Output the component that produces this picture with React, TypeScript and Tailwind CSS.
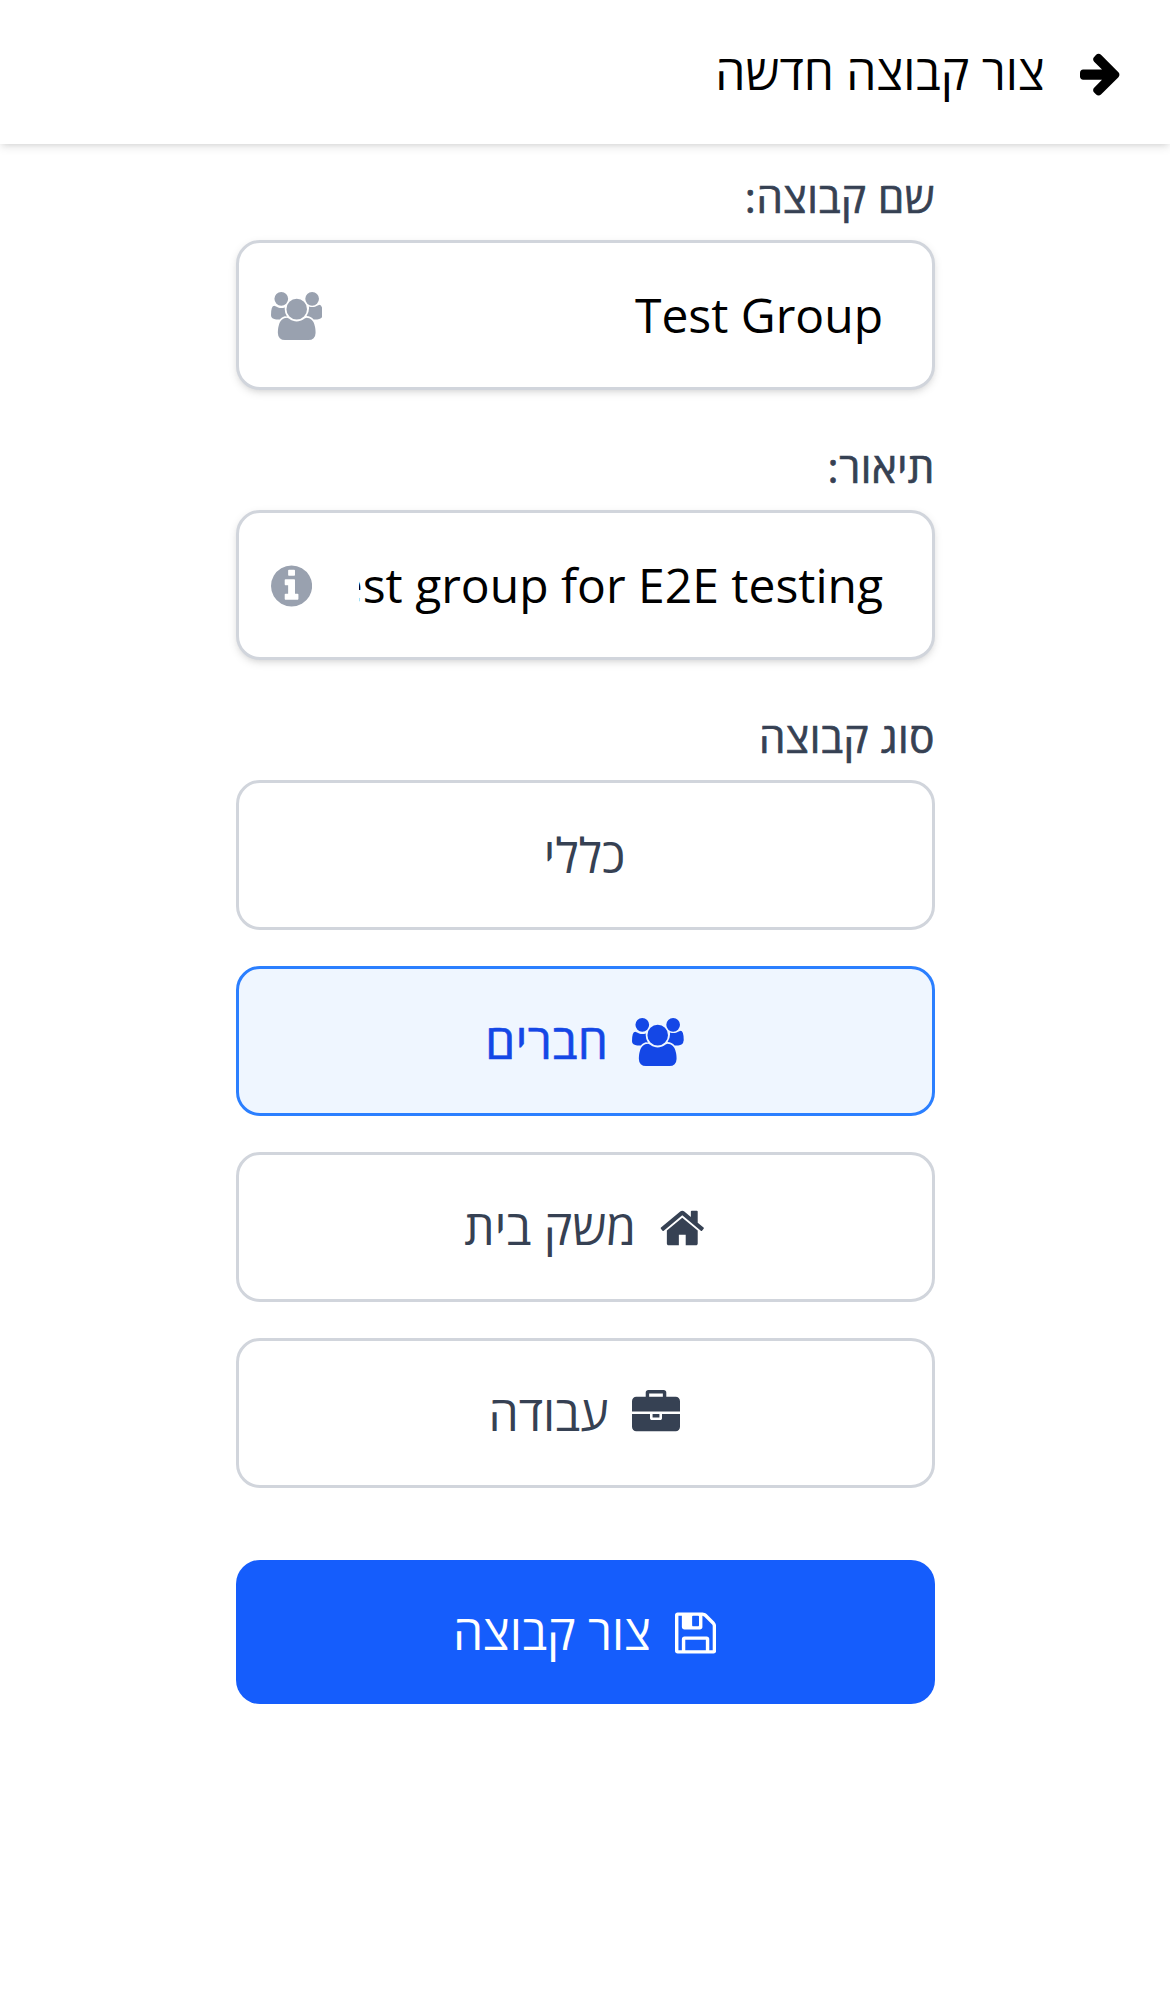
import React, { useState } from "react";

type IconProps = { className?: string };

function UsersIcon({ className = "" }: IconProps) {
  return (
    <svg viewBox="64 0 1920 1792" fill="currentColor" className={`mt-[2px] h-[48px] w-[51.43px] shrink-0 ${className}`}>
      <path d="M657 896q-162 5-265 128h-134q-82 0-138-40.500t-56-118.500q0-353 124-353 6 0 43.500 21t97.500 42.500 119 21.500q67 0 133-23-5 37-5 66 0 159 93 290zm1071 637q0 120-73 189.500t-194 69.500h-874q-121 0-194-69.500t-73-189.500q0-53 3.500-103.500t14-109 26.500-108.500 43-97.500 62-81 85.500-53.500 111.500-20q10 0 43 21.500t73 48 107 48 135 21.500 135-21.500 107-48 73-48 43-21.500q61 0 111.500 20t85.500 53.500 62 81 43 97.500 26.500 108.500 14 109 3.500 103.500zm-1024-1277q0 106-75 181t-181 75-181-75-75-181 75-181 181-75 181 75 75 181zm704 384q0 159-112.500 271.500t-271.500 112.500-271.500-112.500-112.500-271.500 112.500-271.500 271.500-112.500 271.500 112.500 112.500 271.500zm576 225q0 78-56 118.500t-138 40.500h-134q-103-123-265-128 93-131 93-290 0-29-5-66 66 23 133 23 59 0 119-21.500t97.500-42.500 43.500-21q124 0 124 353zm-128-609q0 106-75 181t-181 75-181-75-75-181 75-181 181-75 181 75 75 181z" />
    </svg>
  );
}

function InfoIcon({ className = "" }: IconProps) {
  return (
    <svg viewBox="128 0 1536 1792" fill="currentColor" className={`mt-[2px] h-[48px] w-[41.14px] shrink-0 ${className}`}>
      <path d="M1152 1376v-160q0-14-9-23t-23-9h-96v-512q0-14-9-23t-23-9h-320q-14 0-23 9t-9 23v160q0 14 9 23t23 9h96v320h-96q-14 0-23 9t-9 23v160q0 14 9 23t23 9h448q14 0 23-9t9-23zm-128-896v-160q0-14-9-23t-23-9h-192q-14 0-23 9t-9 23v160q0 14 9 23t23 9h192q14 0 23-9t9-23zm640 416q0 209-103 385.500t-279.500 279.500-385.500 103-385.500-103-279.500-279.500-103-385.500 103-385.500 279.500-279.500 385.500-103 385.500 103 279.500 279.500 103 385.500z" />
    </svg>
  );
}

function ArrowRightIcon() {
  return (
    <svg viewBox="128 0 1536 1792" fill="currentColor" className="mt-[2px] h-[48px] w-[41.14px] shrink-0">
      <path d="M1600 960q0 54-37 91l-651 651q-39 37-91 37-51 0-90-37l-75-75q-38-38-38-91t38-91l293-293h-704q-52 0-84.500-37.500t-32.500-90.500v-128q0-53 32.500-90.500t84.500-37.500h704l-293-294q-38-36-38-90t38-90l75-75q38-38 90-38 53 0 91 38l651 651q37 35 37 90z" />
    </svg>
  );
}

function HomeIcon() {
  return (
    <svg viewBox="64 0 1664 1792" fill="currentColor" className="mt-[2px] h-[48px] w-[44.57px] shrink-0">
      <path d="M1472 992v480q0 26-19 45t-45 19h-384v-384h-256v384h-384q-26 0-45-19t-19-45v-480q0-1 .5-3t.5-3l575-474 575 474q1 2 1 6zm223-69l-62 74q-8 9-21 11h-3q-13 0-21-7l-692-577-692 577q-12 8-24 7-13-2-21-11l-62-74q-8-10-7-23.500t11-21.500l719-599q32-26 76-26t76 26l244 204v-195q0-14 9-23t23-9h192q14 0 23 9t9 23v408l219 182q10 8 11 21.500t-7 23.500z" />
    </svg>
  );
}

function BriefcaseIcon() {
  return (
    <svg viewBox="0 0 1792 1792" fill="currentColor" className="mt-[2px] size-[48px] shrink-0">
      <path d="M640 256h512v-128h-512v128zm1152 640v480q0 66-47 113t-113 47h-1472q-66 0-113-47t-47-113v-480h672v160q0 26 19 45t45 19h320q26 0 45-19t19-45v-160h672zm-768 0v128h-256v-128h256zm768-480v384h-1792v-384q0-66 47-113t113-47h352v-160q0-40 28-68t68-28h576q40 0 68 28t28 68v160h352q66 0 113 47t47 113z" />
    </svg>
  );
}

function SaveIcon() {
  return (
    <svg viewBox="128 0 1536 1792" fill="currentColor" className="mt-[2px] h-[48px] w-[41.14px] shrink-0">
      <path d="M512 1536h768v-384h-768v384zm896 0h128v-896q0-14-10-38.500t-20-34.500l-281-281q-10-10-34-20t-39-10v416q0 40-28 68t-68 28h-576q-40 0-68-28t-28-68v-416h-128v1280h128v-416q0-40 28-68t68-28h832q40 0 68 28t28 68v416zm-384-928v-320q0-13-9.500-22.500t-22.500-9.500h-192q-13 0-22.500 9.500t-9.500 22.500v320q0 13 9.500 22.500t22.500 9.500h192q13 0 22.500-9.500t9.500-22.500zm640 32v928q0 40-28 68t-68 28h-1344q-40 0-68-28t-28-68v-1344q0-40 28-68t68-28h928q40 0 88 20t76 48l280 280q28 28 48 76t20 88z" />
    </svg>
  );
}

function Field({ label, value, icon }: { label: string; value: string; icon: React.ReactNode }) {
  return (
    <label className="mb-[48px] block">
      <span className="mb-[14px] block text-[42px] leading-[58px] font-medium tracking-[0.55px] text-gray-700 [-webkit-text-stroke:0.7px_currentColor]">
        {label}
      </span>
      <span className="relative block">
        <input
          type="text"
          defaultValue={value}
          className="block h-[150px] w-full rounded-[24px] border-[3px] border-gray-300 bg-white pr-[49px] pb-[1px] pl-[120px] text-[48px] text-black shadow-[0_3px_9px_rgb(0_0_0/0.1),0_3px_6px_-3px_rgb(0_0_0/0.1)] outline-none"
        />
        <span className="pointer-events-none absolute inset-y-0 left-[35px] flex items-center text-gray-400">{icon}</span>
      </span>
    </label>
  );
}

const types = [
  { label: "כללי", icon: null },
  { label: "חברים", icon: <UsersIcon /> },
  { label: "משק בית", icon: <HomeIcon /> },
  { label: "עבודה", icon: <BriefcaseIcon /> },
];

export default function App() {
  const [selected, setSelected] = useState(1);
  return (
    <div dir="rtl" className="min-h-[1992px] w-full bg-white font-['Open_Sans',sans-serif] text-black">
      <header className="flex h-[144px] items-center gap-[35px] bg-white pr-[49px] shadow-[0_3px_9px_rgb(0_0_0/0.1),0_3px_6px_-3px_rgb(0_0_0/0.1)]">
        <ArrowRightIcon />
        <h1 className="text-[48px] leading-[72px] tracking-[0.05px]">צור קבוצה חדשה</h1>
      </header>
      <main className="mr-[235px] w-[699px] pt-[24px]">
        <Field label="שם קבוצה:" value="Test Group" icon={<UsersIcon />} />
        <Field label="תיאור:" value="Test group for E2E testing" icon={<InfoIcon />} />
        <p className="mb-[14px] text-[42px] leading-[58px] font-medium tracking-[0.55px] text-gray-700 [-webkit-text-stroke:0.7px_currentColor]">
          סוג קבוצה
        </p>
        <div className="flex flex-col gap-[36px]">
          {types.map((t, i) => (
            <button
              key={t.label}
              type="button"
              onClick={() => setSelected(i)}
              className={`flex h-[150px] items-center justify-center gap-[24px] rounded-[24px] border-[3px] pr-[2px] text-[48px] leading-[72px] ${
                i === selected
                  ? "border-blue-500 bg-blue-50 tracking-[0.5px] text-blue-700 [-webkit-text-stroke:0.6px_currentColor]"
                  : "border-gray-300 bg-white text-gray-700"
              }`}
            >
              {t.icon}
              <span>{t.label}</span>
            </button>
          ))}
        </div>
        <button
          type="button"
          className="mt-[72px] flex h-[144px] w-full items-center justify-center gap-[24px] rounded-[24px] bg-blue-600 pr-[2px] text-[48px] leading-[72px] text-white"
        >
          <SaveIcon />
          <span>צור קבוצה</span>
        </button>
      </main>
    </div>
  );
}
